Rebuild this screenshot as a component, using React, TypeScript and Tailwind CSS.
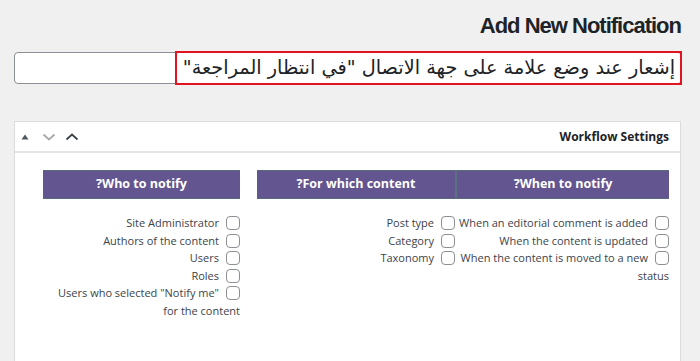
import React from "react";

const body = { fontFamily: '"Open Sans", "Noto Sans", sans-serif' };

function Box() {
  return (
    <span className="inline-block w-[14px] h-[14px] border border-[#8c8f94] rounded-[4px] bg-white align-[-3px] ml-[7px]" />
  );
}

function Item({ children }: { children: React.ReactNode }) {
  return (
    <div className="leading-[17.5px]">
      <Box />
      {children}
    </div>
  );
}

function Bar({ title, divider }: { title: string; divider?: boolean }) {
  return (
    <div
      className={
        "h-[29px] flex items-center justify-center bg-[#63558f] border-y border-[#5b6a7a] text-white text-[12.5px] font-bold" +
        (divider ? " border-l-2 border-l-[#5b7282]" : "")
      }
    >
      {title}
    </div>
  );
}

export default function App() {
  return (
    <div className="w-full h-[361px] bg-[#f0f0f1] overflow-hidden pl-[14px] pr-[18px]" style={body}>
      <h1
        className="text-right text-[22px] font-bold text-[#1d2327] tracking-[-1px] pt-[13px] leading-[26px] pr-[1px]"
        style={{ fontFamily: '"Liberation Sans", Arial, sans-serif' }}
      >
        Add New Notification
      </h1>
      <div className="relative mt-[13px] h-[32px] bg-white border border-[#8c8f94] rounded-[4px]">
        <div
          dir="rtl"
          className="absolute right-[-1px] top-[-2px] w-[507px] h-[34px] border-2 border-[#e3141f] flex items-center pr-[5px] text-[19.3px] text-[#1d2327] whitespace-nowrap"
          style={{ fontFamily: '"DejaVu Sans", sans-serif' }}
        >
          إشعار عند وضع علامة على جهة الاتصال "في انتظار المراجعة"
        </div>
      </div>

      <div className="mt-[37px] bg-white border border-[#dcdcde] h-[260px] mr-[1px]">
        <div className="h-[31px] border-b-2 border-[#e5e5e5] flex items-center justify-between pl-[6px] pr-[11px]">
          <div className="flex items-center gap-[9px]">
            <svg width="8" height="6" viewBox="0 0 8 6">
              <path d="M4 0.5 L7.5 5.5 L0.5 5.5 Z" fill="#50575e" />
            </svg>
            <svg width="14" height="10" viewBox="0 0 14 10" className="ml-[4px]">
              <path d="M1.5 2.5 L7 7.5 L12.5 2.5" stroke="#a7aaad" strokeWidth="1.8" fill="none" />
            </svg>
            <svg width="14" height="10" viewBox="0 0 14 10">
              <path d="M1.5 7.5 L7 2.5 L12.5 7.5" stroke="#3c434a" strokeWidth="1.8" fill="none" />
            </svg>
          </div>
          <span className="text-[12px] font-bold text-[#1d2327]">Workflow Settings</span>
        </div>

        <div dir="rtl" className="flex pr-[11px] pt-[17px] text-[11px] text-[#3c434a]">
          <div className="w-[214px]">
            <Bar title="When to notify?" divider />
            <div className="pt-[15px]">
              <Item>When an editorial comment is added</Item>
              <Item>When the content is updated</Item>
              <Item>
                When the content is moved to a new
                <br />
                status
              </Item>
            </div>
          </div>
          <div className="w-[198px]">
            <Bar title="For which content?" />
            <div className="pt-[15px]">
              <Item>Post type</Item>
              <Item>Category</Item>
              <Item>Taxonomy</Item>
            </div>
          </div>
          <div className="w-[197px] mr-[17px]">
            <Bar title="Who to notify?" />
            <div className="pt-[15px]">
              <Item>Site Administrator</Item>
              <Item>Authors of the content</Item>
              <Item>Users</Item>
              <Item>Roles</Item>
              <Item>
                <span dir="ltr">Users who selected "Notify me"</span>
                <br />
                for the content
              </Item>
            </div>
          </div>
        </div>
      </div>
    </div>
  );
}
